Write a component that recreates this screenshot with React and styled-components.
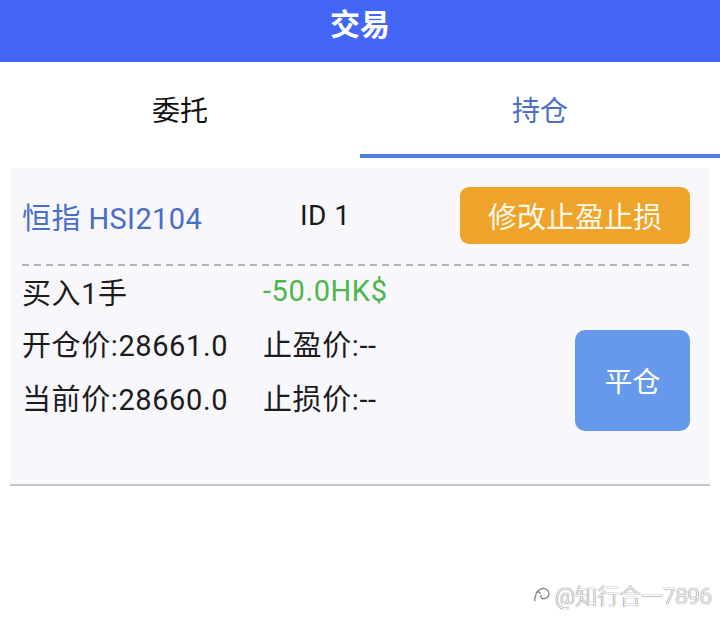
import React from "react";
import styled, { createGlobalStyle } from "styled-components";

const Global = createGlobalStyle`
  html, body { margin: 0; padding: 0; background: #ffffff; }
  body { font-family: Roboto, "Noto Sans CJK SC", sans-serif; }
  * { box-sizing: border-box; }
`;

const Page = styled.div`
  position: relative;
  width: 720px;
  height: 630px;
  background: #ffffff;
  overflow: hidden;
`;

const Header = styled.header`
  height: 62px;
  background: #4466f6;
  display: flex;
  justify-content: center;
`;

const Title = styled.h1`
  margin: 0;
  line-height: 50px;
  font-size: 30px;
  font-weight: 700;
  color: #ffffff;
`;

const Tabs = styled.nav`
  display: flex;
  height: 96px;
`;

const Tab = styled.div`
  flex: 1;
  display: flex;
  align-items: center;
  justify-content: center;
  padding-top: 1px;
  font-size: 28px;
  color: ${(p) => (p.$active ? "#4d6fc6" : "#111111")};
  border-bottom: 4px solid ${(p) => (p.$active ? "#4a80e0" : "transparent")};
`;

const Card = styled.section`
  margin: 10px 10px 0;
  background: #f7f7fc;
  border-bottom: 2px solid #c4c4ca;
  padding: 19px 20px 53px 12px;
`;

const TopRow = styled.div`
  display: flex;
  align-items: center;
  height: 57px;
`;

const Name = styled.span`
  width: 278px;
  font-size: 29px;
  letter-spacing: 0.4px;
  color: #4a6dc8;
`;

const IdText = styled.span`
  font-size: 28px;
  letter-spacing: 0.4px;
  color: #1a1a1a;
`;

const OrangeButton = styled.button`
  margin-left: auto;
  width: 230px;
  height: 57px;
  border: none;
  border-radius: 9px;
  background: #f0a32a;
  color: #fff9ea;
  font-family: inherit;
  font-size: 29px;
  padding: 0 0 2px;
`;

const Divider = styled.div`
  margin-top: 20px;
  height: 2px;
  background: repeating-linear-gradient(
    to right,
    #b4b4b8 0 7px,
    transparent 7px 12px
  );
`;

const Body = styled.div`
  display: flex;
  align-items: flex-start;
`;

const InfoGrid = styled.div`
  flex: 1;
  display: grid;
  grid-template-columns: 241px 1fr;
  grid-template-rows: 50px 54px 54px;
  align-items: center;
`;

const Cell = styled.span`
  font-size: 29px;
  letter-spacing: 0.6px;
  color: ${(p) => p.$color || "#1c1c1c"};
  white-space: nowrap;
`;

const CloseButton = styled.button`
  margin-top: 64px;
  width: 115px;
  height: 101px;
  border: none;
  border-radius: 10px;
  background: #6699ec;
  color: #ffffff;
  font-family: inherit;
  font-size: 28px;
  padding: 0 0 2px;
`;

const Watermark = styled.div`
  position: absolute;
  right: 8px;
  top: 578px;
  display: flex;
  align-items: center;
  gap: 3px;
  font-size: 22px;
  font-weight: 300;
  color: #ffffff;
  text-shadow: 0 0 1px #666, 0 0 1px #666;
  white-space: nowrap;
`;

const Logo = () => (
  <svg width="20" height="20" viewBox="0 0 22 22" fill="none" stroke="#888" strokeWidth="1.5">
    <path d="M3 19 C3 12 5 8 9 6 C12 4 16 5 18 8 C20 11 18 15 14 16 C11 17 9 15 10 12" />
    <path d="M5 9 C7 8 9 9 9 11" />
  </svg>
);

export default function App() {
  return (
    <Page>
      <Global />
      <Header>
        <Title>交易</Title>
      </Header>
      <Tabs>
        <Tab>委托</Tab>
        <Tab $active>持仓</Tab>
      </Tabs>
      <Card>
        <TopRow>
          <Name>恒指 HSI2104</Name>
          <IdText>ID 1</IdText>
          <OrangeButton>修改止盈止损</OrangeButton>
        </TopRow>
        <Divider />
        <Body>
          <InfoGrid>
            <Cell>买入1手</Cell>
            <Cell $color="#4cb84a">-50.0HK$</Cell>
            <Cell>开仓价:28661.0</Cell>
            <Cell>止盈价:--</Cell>
            <Cell>当前价:28660.0</Cell>
            <Cell>止损价:--</Cell>
          </InfoGrid>
          <CloseButton>平仓</CloseButton>
        </Body>
      </Card>
      <Watermark>
        <Logo />
        <span>@知行合一7896</span>
      </Watermark>
    </Page>
  );
}
